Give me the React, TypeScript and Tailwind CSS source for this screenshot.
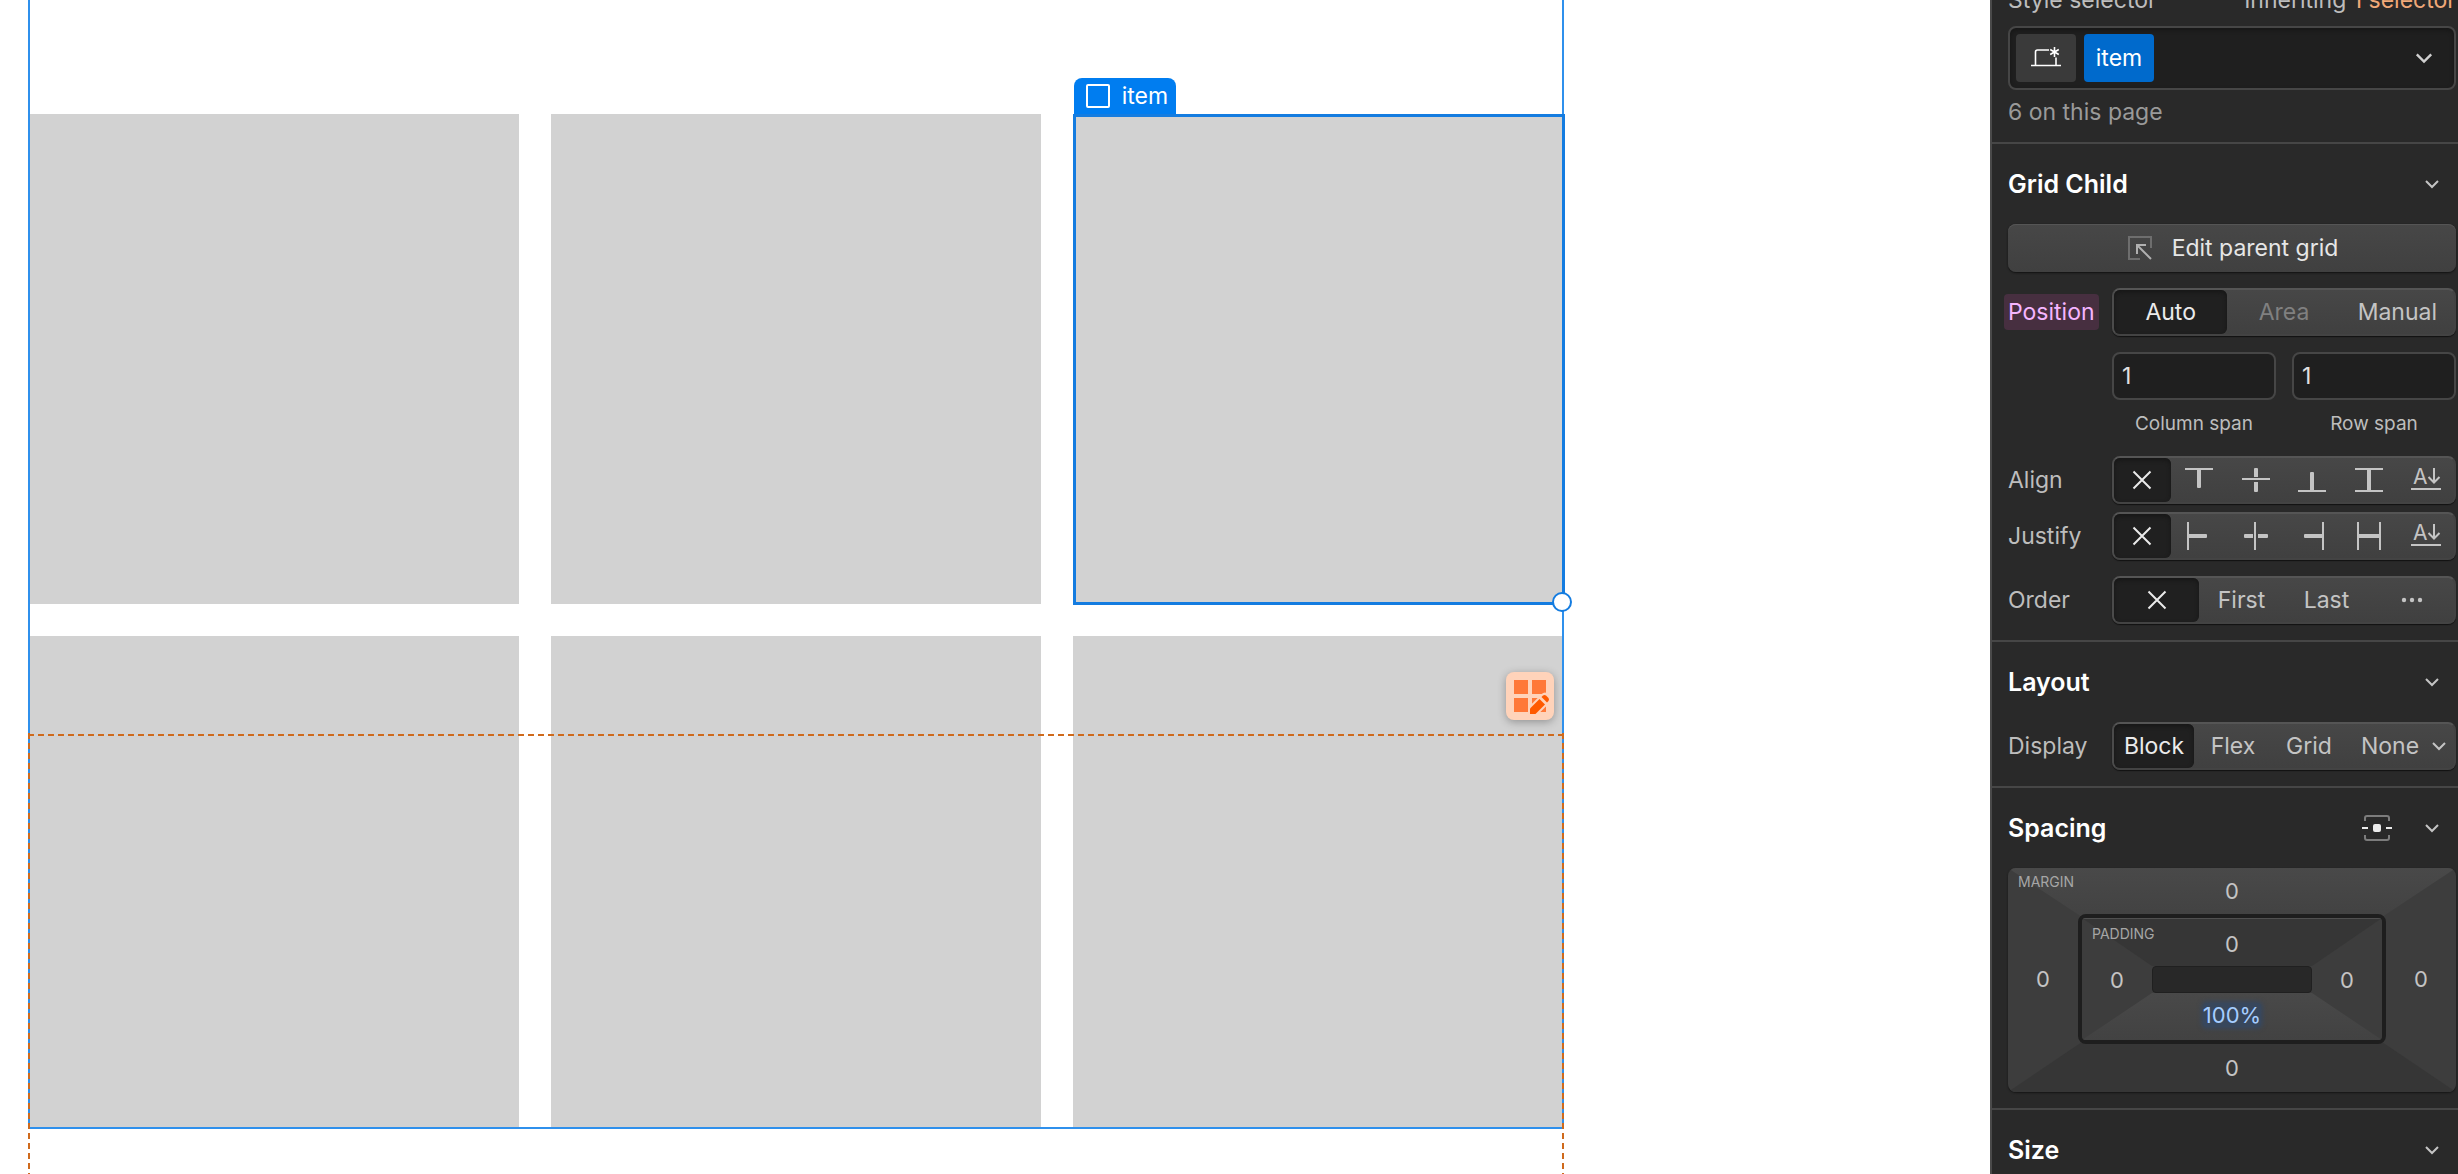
import { useState, type ReactNode } from 'react'

const cells = [0, 1, 2, 3, 4, 5]
const selectedCell = 2

function Chevron({ big = false }: { big?: boolean }) {
    return (
        <svg width={big ? 20 : 16} height={big ? 12 : 10} viewBox="0 0 16 10" fill="none" stroke="currentColor" strokeWidth="2">
            <path d="M2 2l6 6 6-6" />
        </svg>
    )
}

function CrossIcon() {
    return (
        <svg width="20" height="20" viewBox="0 0 20 20" stroke="currentColor" strokeWidth="2">
            <path d="M1.5 1.5l17 17M18.5 1.5l-17 17" />
        </svg>
    )
}

// Every alignment icon is drawn around the centre of the same 32px box
function BarsIcon({ d }: { d: string }) {
    return (
        <svg width="32" height="32" viewBox="-16 -16 32 32" fill="currentColor">
            <path d={d} />
        </svg>
    )
}

function BaselineIcon() {
    return (
        <svg width="32" height="32" viewBox="-16 -16 32 32" fill="none" stroke="currentColor" strokeWidth="2">
            <text x="-13" y="4" fontSize="21" fill="currentColor" stroke="none">A</text>
            <path d="M8-12V2M2.500-3L8 2.500 13.500-3M-15 9h30" />
        </svg>
    )
}

const alignOptions = [
    { name: 'Align start', icon: <BarsIcon d="M-14-12h28v2h-12v17q0 1-1 1h-2q-1 0-1-1v-17h-12z" /> },
    { name: 'Align center', icon: <BarsIcon d="M-14-2h28v2h-28zM-2-3v-8q0-1 1-1h2q1 0 1 1v8zM-2 2h4v9q0 1-1 1h-2q-1 0-1-1z" /> },
    { name: 'Align end', icon: <BarsIcon d="M-14 12h28v-2h-12v-17q0-1-1-1h-2q-1 0-1 1v17h-12z" /> },
    { name: 'Align stretch', icon: <BarsIcon d="M-14-12h28v2h-12v20h12v2h-28v-2h12v-20h-12z" /> },
    { name: 'Align baseline', icon: <BaselineIcon /> },
]

const justifyOptions = [
    { name: 'Justify start', icon: <BarsIcon d="M-12-14v28h2v-12h17q1 0 1-1v-2q0-1-1-1h-17v-12z" /> },
    { name: 'Justify center', icon: <BarsIcon d="M-2-14v28h2v-28zM-3-2h-8q-1 0-1 1v2q0 1 1 1h8zM2-2v4h9q1 0 1-1v-2q0-1-1-1z" /> },
    { name: 'Justify end', icon: <BarsIcon d="M12-14v28h-2v-12h-17q-1 0-1-1v-2q0-1 1-1h17v-12z" /> },
    { name: 'Justify stretch', icon: <BarsIcon d="M-12-14v28h2v-12h20v12h2v-28h-2v12h-20v-12z" /> },
    { name: 'Justify baseline', icon: <BaselineIcon /> },
]

type Option = { name: string; icon?: ReactNode; disabled?: boolean }

function Segmented({ label, options, columns }: { label: string; options: Option[]; columns: string }) {
    const [active, setActive] = useState(0)

    return (
        <div
            role="group"
            aria-label={label}
            className={`grid h-12 rounded-lg border-2 border-[#4b4b4b] border-t-[#555555] border-r-[#434343] border-b-[#434343] bg-linear-to-b from-[#474747] to-[#404040] shadow-[0_1px_1px_#111111] ${columns}`}
        >
            {options.map((option, i) => (
                <button
                    key={option.name}
                    type="button"
                    aria-label={option.name}
                    aria-pressed={active === i}
                    disabled={option.disabled}
                    onClick={() => setActive(i)}
                    className={`flex items-center justify-center rounded-md ${active === i ? 'bg-[#202020] text-[#ebebeb] shadow-[inset_0_2px_4px_#161616]' : option.disabled ? 'text-[#808080]' : 'text-[#c4c4c4]'}`}
                >
                    {option.icon ?? option.name}
                </button>
            ))}
        </div>
    )
}

function Row({ label, children, className = '' }: { label: string; children: ReactNode; className?: string }) {
    return (
        <div className={`grid grid-cols-[104px_1fr] items-center ${className}`}>
            <span>{label}</span>
            {children}
        </div>
    )
}

function SectionHeader({ title, children }: { title: string; children?: ReactNode }) {
    return (
        <div className="flex h-20 items-center justify-between pr-4">
            <h2 className="text-[25px] leading-8 font-semibold text-white">{title}</h2>
            <div className="flex items-center gap-8">
                {children}
                <button type="button" aria-label={`Toggle ${title}`} className="text-[#c4c4c4]"><Chevron /></button>
            </div>
        </div>
    )
}

function SpanInput({ id, label }: { id: string; label: string }) {
    return (
        <div>
            <input
                id={id}
                defaultValue="1"
                className="block h-12 w-full rounded-lg border-2 border-[#464646] bg-[#1f1f1f] px-2 text-[#e0e0e0] outline-none"
            />
            <label htmlFor={id} className="flex h-12 items-center justify-center text-[19px] text-[#bdbdbd]">{label}</label>
        </div>
    )
}

function SpacingBox() {
    return (
        <div className="relative grid h-56 grid-cols-[70px_1fr_70px] grid-rows-[46px_1fr_48px] overflow-hidden rounded-lg text-[22px] text-[#c4c4c4] shadow-[0_1px_2px_#151515]">
            <svg className="absolute inset-0 h-full w-full" viewBox="0 0 448 224" preserveAspectRatio="none">
                <defs>
                    <linearGradient id="lit" x1="0" y1="0" x2="0" y2="1">
                        <stop offset="0" stopColor="#494949" />
                        <stop offset="1" stopColor="#424242" />
                    </linearGradient>
                </defs>
                <rect width="448" height="224" fill="#3d3d3d" />
                <path d="M0 0h448l-74 49H74z" fill="url(#lit)" />
                <path d="M0 224h448l-74-50H74z" fill="#363636" />
            </svg>
            <span className="absolute top-1 left-[10px] text-[14px] leading-5 text-[#a6a6a6]">MARGIN</span>
            <button type="button" aria-label="Margin top" className="relative col-start-2">0</button>
            <button type="button" aria-label="Margin left" className="relative col-start-1 row-start-2">0</button>
            <div className="relative col-start-2 row-start-2 grid grid-cols-[70px_1fr_70px] grid-rows-[48px_1fr_47px] overflow-hidden rounded-lg border-4 border-[#1e1e1e]">
                <svg className="absolute inset-0 h-full w-full" viewBox="0 0 300 122" preserveAspectRatio="none">
                    <rect width="300" height="122" fill="#3d3d3d" />
                    <path d="M0 0h300l-70 48H70z" fill="#363636" />
                    <path d="M0 122h300l-70-47H70z" fill="url(#lit)" />
                    <path d="M0 .5h300" stroke="#505050" />
                </svg>
                <span className="absolute top-[6px] left-[10px] text-[14px] leading-5 text-[#a6a6a6]">PADDING</span>
                <button type="button" aria-label="Padding top" className="relative col-start-2 pt-1">0</button>
                <button type="button" aria-label="Padding left" className="relative col-start-1 row-start-2 leading-6">0</button>
                <div className="relative col-start-2 row-start-2 rounded-sm border border-[#202020] bg-[#282828]" />
                <button type="button" aria-label="Padding right" className="relative col-start-3 row-start-2 leading-6">0</button>
                <button type="button" aria-label="Padding bottom" className="relative col-start-2 row-start-3 flex items-center justify-center pb-1 text-[#a6cdff]">
                    <span className="rounded-sm bg-[#38475c] leading-6 shadow-[0_0_4px_2px_#38475c]">100%</span>
                </button>
            </div>
            <button type="button" aria-label="Margin right" className="relative col-start-3 row-start-2">0</button>
            <button type="button" aria-label="Margin bottom" className="relative col-start-2 row-start-3">0</button>
        </div>
    )
}

function StylePanel() {
    return (
        <aside className="w-[468px] shrink-0 overflow-hidden border-l-2 border-[#4a4a4a] bg-[#292929] text-[23px] leading-7 text-[#bdbdbd]">
            <section className="border-b-2 border-[#464646] pr-[2px] pb-4 pl-4">
                <div className="-mt-[14px] flex justify-between pb-3">
                    <span>Style selector</span>
                    <span>Inheriting <a href="#selectors" className="text-[#f0a878]">1 selector</a></span>
                </div>
                <div className="flex h-16 items-center gap-2 rounded-lg border-2 border-[#464646] bg-[#1f1f1f] pr-5 pl-[6px] text-white shadow-[inset_0_2px_4px_#161616]">
                    <button type="button" aria-label="Breakpoint" className="flex h-12 w-[60px] items-center justify-center rounded-sm bg-[#3a3a3a]">
                        <svg width="32" height="32" viewBox="0 0 32 32" fill="none" stroke="currentColor" strokeWidth="1.600">
                            <path d="M1 23.500h30M5.500 23V10q0-2 2-2H19M26 15.500V23" />
                            <path d="M24.500 5v10M20.200 7.500l8.600 5M28.800 7.500l-8.600 5" />
                        </svg>
                    </button>
                    <button type="button" className="h-12 w-[70px] rounded-sm bg-[#006acc]">item</button>
                    <button type="button" aria-label="Open selector list" className="ml-auto text-[#d0d0d0]"><Chevron big /></button>
                </div>
                <p className="pt-2 text-[#9a9a9a]">6 on this page</p>
            </section>

            <section className="border-b-2 border-[#464646] pr-[2px] pb-4 pl-4">
                <SectionHeader title="Grid Child" />
                <button type="button" className="flex h-12 w-full items-center justify-center gap-5 rounded-lg bg-linear-to-b from-[#474747] to-[#404040] pl-[2px] text-[#e6e6e6] shadow-[inset_0_1px_0_#555555,0_1px_2px_#111111]">
                    <svg width="24" height="24" viewBox="0 0 24 24" fill="none" strokeWidth="2">
                        <path d="M23 12V1H1v22h11" stroke="#6e6e6e" />
                        <path d="M9 18V9h9M9.500 9.500L23 23" stroke="#b0b0b0" />
                    </svg>
                    Edit parent grid
                </button>
                <div className="mt-4 grid grid-cols-[104px_1fr] items-center">
                    <span className="-ml-1 justify-self-start rounded-sm bg-[#472f40] px-1 py-1 text-[#f5b5ff]">Position</span>
                    <Segmented
                        label="Position"
                        columns="grid-cols-3"
                        options={[{ name: 'Auto' }, { name: 'Area', disabled: true }, { name: 'Manual' }]}
                    />
                </div>
                <div className="mt-4 ml-[104px] grid grid-cols-2 gap-4">
                    <SpanInput id="column-span" label="Column span" />
                    <SpanInput id="row-span" label="Row span" />
                </div>
                <Row label="Align" className="mt-2">
                    <Segmented label="Align" columns="grid-cols-6" options={[{ name: 'Align auto', icon: <CrossIcon /> }, ...alignOptions]} />
                </Row>
                <Row label="Justify" className="mt-2">
                    <Segmented label="Justify" columns="grid-cols-6" options={[{ name: 'Justify auto', icon: <CrossIcon /> }, ...justifyOptions]} />
                </Row>
                <Row label="Order" className="mt-4">
                    <Segmented
                        label="Order"
                        columns="grid-cols-4"
                        options={[
                            { name: 'Default order', icon: <CrossIcon /> },
                            { name: 'First' },
                            { name: 'Last' },
                            {
                                name: 'Custom order',
                                icon: (
                                    <svg width="22" height="6" viewBox="0 0 22 6" fill="currentColor">
                                        <circle cx="3" cy="3" r="2.200" />
                                        <circle cx="11" cy="3" r="2.200" />
                                        <circle cx="19" cy="3" r="2.200" />
                                    </svg>
                                ),
                            },
                        ]}
                    />
                </Row>
            </section>

            <section className="border-b-2 border-[#464646] pr-[2px] pb-4 pl-4">
                <SectionHeader title="Layout" />
                <Row label="Display">
                    <Segmented
                        label="Display"
                        columns="grid-cols-[80px_78px_74px_1fr]"
                        options={[
                            { name: 'Block' },
                            { name: 'Flex' },
                            { name: 'Grid' },
                            { name: 'None', icon: <span className="flex items-center gap-3 pl-2">None <Chevron /></span> },
                        ]}
                    />
                </Row>
            </section>

            <section className="border-b-2 border-[#464646] pr-[2px] pb-4 pl-4">
                <SectionHeader title="Spacing">
                    <button type="button" aria-label="Center element">
                        <svg width="30" height="26" viewBox="0 0 30 26" fill="none" strokeWidth="2">
                            <path d="M3 6V3q0-2 2-2h20q2 0 2 2v3M3 20v3q0 2 2 2h20q2 0 2-2v-3" stroke="#7c7c7c" />
                            <path d="M0 13h6M24 13h6" stroke="#ebebeb" />
                            <rect x="11" y="9" width="8" height="8" rx="2" fill="#ebebeb" />
                        </svg>
                    </button>
                </SectionHeader>
                <SpacingBox />
            </section>

            <section className="pr-[2px] pl-4">
                <SectionHeader title="Size" />
            </section>
        </aside>
    )
}

function Canvas() {
    return (
        <main className="relative min-w-0 flex-1 overflow-hidden bg-white pr-8 pl-7">
            <div className="relative w-full max-w-[1536px]">
                <div className="grid grid-cols-3 gap-8 border-x-2 border-b-2 border-[#2f90ec] pt-[114px]">
                    {cells.map((cell) => (
                        <div key={cell} className="relative aspect-[489/490] bg-[#d2d2d2]">
                            {cell === selectedCell && (
                                <>
                                    <div className="absolute top-0 -right-[3px] -bottom-px left-0 border-3 border-[#147ce0]" />
                                    <div className="absolute bottom-full left-px flex h-9 items-center gap-3 rounded-t-lg bg-[#007df0] pr-2 pl-3 text-[23px] text-white">
                                        <span className="size-6 rounded-xs border-2 border-white" />
                                        item
                                    </div>
                                    <div className="absolute -right-[10px] -bottom-2 z-10 size-5 rounded-full border-2 border-[#147ce0] bg-white" />
                                </>
                            )}
                        </div>
                    ))}
                </div>

                {/* padding area of the selected item */}
                <div className="absolute top-[733px] left-0 h-[490px] w-full">
                    <div className="absolute inset-x-0 top-px h-[2px] bg-[repeating-linear-gradient(90deg,#cf6a1c_0_6px,transparent_6px_10px)]" />
                    <div className="absolute inset-y-0 left-0 w-[2px] bg-[repeating-linear-gradient(180deg,#cf6a1c_0_6px,transparent_6px_10px)]" />
                    <div className="absolute inset-y-0 right-0 w-[2px] bg-[repeating-linear-gradient(180deg,#cf6a1c_0_6px,transparent_6px_10px)]" />
                </div>

                <button type="button" aria-label="Edit grid" className="absolute top-[672px] right-[10px] flex size-12 items-center justify-center rounded-lg bg-[#ffd3ba] shadow-[0_2px_8px_rgba(0,0,0,0.3)]">
                    <svg width="40" height="40" viewBox="0 0 40 40">
                        <path d="M4 4h14v14H4zM22 4h14v14H22zM4 22h14v14H4zM22 22h14v14H22z" fill="#ff7838" />
                        <path d="M20 38v-5.500L33 19.500q2-2 4 0l1.500 1.500q2 2 0 4L25.500 38z" fill="#ffd3ba" stroke="#ffd3ba" strokeWidth="4" />
                        <path d="M20 38v-5.500L29.500 23l5.500 5.500-9.500 9.500z" fill="#ff5a00" />
                        <path d="M31.500 21l1.500-1.500q1.500-1 3 0l2.500 2.500q1 1.500 0 3L37 26.500z" fill="#ff5a00" />
                    </svg>
                </button>
            </div>
        </main>
    )
}

function App() {
    return (
        <div className="flex h-screen overflow-hidden font-['Inter',sans-serif]">
            <Canvas />
            <StylePanel />
        </div>
    )
}

export default App
